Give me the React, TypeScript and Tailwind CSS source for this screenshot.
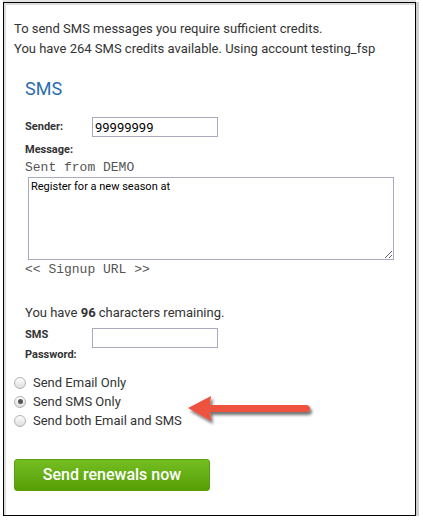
import React from 'react';

/* ─── Radio ──────────────────────────────────────────────────────────────── */

function Radio({ label, checked }: { label: string; checked?: boolean }) {
  return (
    <label className="flex h-[19px] items-center gap-[7px]">
      <span className="flex h-[12px] w-[12px] items-center justify-center rounded-full border border-[#b3b3b3] bg-gradient-to-b from-[#fdfdfd] to-[#dedede]">
        {checked && <span className="h-[5px] w-[5px] rounded-full bg-[#555]" />}
      </span>
      <span className="text-[13px] text-[#333]">{label}</span>
    </label>
  );
}

/* ─── Arrow ──────────────────────────────────────────────────────────────── */

function Arrow() {
  return (
    <svg
      className="absolute left-[184px] top-[392px]"
      width="134"
      height="36"
      viewBox="0 0 134 36"
      aria-hidden
    >
      <defs>
        <filter id="sh" x="-10%" y="-30%" width="130%" height="170%">
          <feDropShadow dx="2" dy="3" stdDeviation="1.6" floodColor="#000" floodOpacity="0.55" />
        </filter>
      </defs>
      <g filter="url(#sh)">
        <path d="M4 16 L27 4 L26 13 L122 13 Q126 13 126 16.5 Q126 20 122 20 L26 20 L27 29 Z" fill="#ee5240" />
      </g>
    </svg>
  );
}

/* ─── App ────────────────────────────────────────────────────────────────── */

export default function App() {
  return (
    <div
      className="relative h-[522px] w-[423px] bg-white pl-[3px] pt-[2px]"
      style={{ fontFamily: 'Roboto, "Liberation Sans", sans-serif' }}
    >
      <div className="h-[514px] w-[413px] border border-black bg-white shadow-[inset_2px_2px_0_#dcdcdc,3px_0_0_#cfcfcf,0_-2px_0_#e5e5e5]">
        <div className="pl-[10px] pt-[16px]">
          {/* Credits */}
          <p className="text-[13px] leading-[20px] text-[#333]">To send SMS messages you require sufficient credits.</p>
          <p className="text-[13px] leading-[20px] text-[#333]">You have 264 SMS credits available. Using account testing_fsp</p>

          {/* SMS block */}
          <div className="ml-[11px]">
            <h2 className="mt-[18px] text-[18px] leading-[24px] text-[#2b6cb0]">SMS</h2>

            <div className="mt-[16px] flex items-center">
              <span className="w-[67px] text-[11px] font-bold text-[#333]">Sender:</span>
              <input
                defaultValue="99999999"
                className="h-[20px] w-[126px] border border-[#a9a9bf] px-[2px] text-[13px] text-black outline-none"
              />
            </div>

            <p className="mt-[6px] text-[11px] font-bold leading-[14px] text-[#333]">Message:</p>
            <p className="mt-[3px] font-['Liberation_Mono',monospace] text-[13px] leading-[16px] text-[#555]">Sent from DEMO</p>
            <textarea
              defaultValue="Register for a new season at"
              className="ml-[3px] mt-[1px] block h-[83px] w-[366px] resize border border-[#a9a9bf] px-[2px] py-[1px] text-[11px] leading-[16px] text-black outline-none"
            />
            <p className="mt-[2px] font-['Liberation_Mono',monospace] text-[13px] leading-[16px] text-[#555]">&lt;&lt; Signup URL &gt;&gt;</p>

            <p className="mt-[26px] text-[13px] leading-[18px] text-[#333]">
              You have <b>96</b> characters remaining.
            </p>

            <div className="mt-[3px] flex items-start">
              <div className="w-[67px] text-[11px] font-bold leading-[20px] text-[#333]">
                <p>SMS</p>
                <p>Password:</p>
              </div>
              <input
                type="password"
                className="mt-[3px] h-[20px] w-[126px] border border-[#a9a9bf] px-[2px] outline-none"
              />
            </div>
          </div>

          {/* Delivery */}
          <div className="mt-[8px] flex flex-col">
            <Radio label="Send Email Only" />
            <Radio label="Send SMS Only" checked />
            <Radio label="Send both Email and SMS" />
          </div>

          <button
            type="button"
            className="mt-[29px] h-[32px] w-[196px] rounded-[3px] border border-[#5b9e12] bg-gradient-to-b from-[#74be22] to-[#579e02] text-[16px] font-medium text-white"
          >
            Send renewals now
          </button>
        </div>
      </div>
      <Arrow />
    </div>
  );
}
